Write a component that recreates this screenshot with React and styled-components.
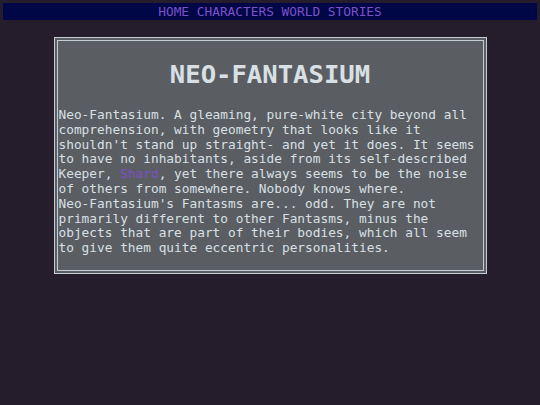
import React from 'react';
import styled, { createGlobalStyle } from 'styled-components';

const GlobalStyles = createGlobalStyle`
  :root {
    --page: #261d2c;
    --navy: #000746;
    --violet: #7c50c9;
    --slate: #5a5d62;
    --frost: #d8e0e6;
    --rim: #c3cbd3;
  }
  * {
    box-sizing: border-box;
  }
  html, body {
    margin: 0;
    padding: 0;
    background: var(--page);
  }
  body {
    font-family: 'DejaVu Sans Mono', monospace;
    font-size: 12.8px;
    line-height: normal;
    min-height: 405px;
  }
`;

const Page = styled.div`
  padding: 3px 3px 20px;
`;

const Nav = styled.nav`
  background: var(--navy);
  text-align: center;
  padding: 1px 0;
  margin-bottom: 17px;
`;

const NavLink = styled.a`
  color: var(--violet);
  text-decoration: none;
`;

const Card = styled.section`
  width: 433px;
  margin: 0 auto;
  padding: 1px;
  background: var(--slate);
  border: 4px double var(--rim);
  color: var(--frost);
  display: flow-root;
`;

const Title = styled.h1`
  font-size: 25.6px;
  font-weight: bold;
  text-align: center;
  margin: 17px 0 19px;
  color: var(--frost);
`;

const Body = styled.p`
  margin: 0 0 12.8px;
  line-height: 14.8px;
`;

const Highlight = styled.span`
  color: var(--violet);
`;

const links = ['HOME', 'CHARACTERS', 'WORLD', 'STORIES'];

export default function App() {
  return (
    <>
      <GlobalStyles />
      <Page>
        <Nav>
          {links.map((l, i) => (
            <React.Fragment key={l}>
              {i > 0 && ' '}
              <NavLink href="#">{l}</NavLink>
            </React.Fragment>
          ))}
        </Nav>
        <Card>
          <Title>NEO-FANTASIUM</Title>
          <Body>
            Neo-Fantasium. A gleaming, pure-white city beyond all
            comprehension, with geometry that looks like it shouldn't stand up
            straight- and yet it does. It seems to have no inhabitants, aside
            from its self-described Keeper, <Highlight>Shard</Highlight>, yet
            there always seems to be the noise of others from somewhere. Nobody
            knows where.
            <br />
            Neo-Fantasium's Fantasms are... odd. They are not primarily
            different to other Fantasms, minus the objects that are part of
            their bodies, which all seem to give them quite eccentric
            personalities.
          </Body>
        </Card>
      </Page>
    </>
  );
}
